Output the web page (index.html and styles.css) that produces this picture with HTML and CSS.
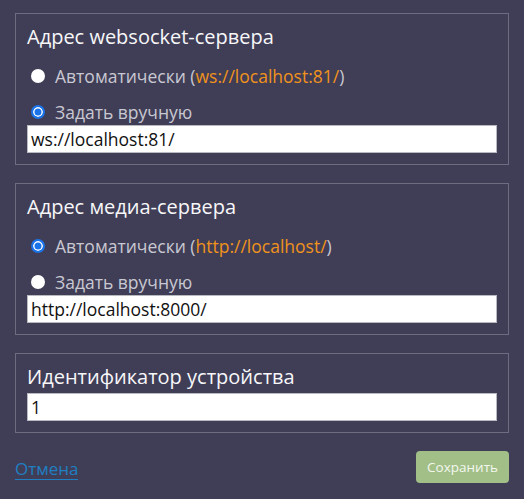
FILE: index.html
```html
<!DOCTYPE html>
<html lang="ru">
<head>
<meta charset="utf-8">
<link rel="stylesheet" href="styles.css">
</head>
<body>
<div class="page">
  <section class="box">
    <div class="title">Адрес websocket-сервера</div>
    <label class="radio-row first"><span class="radio"></span><span>Автоматически (<span class="accent">ws://localhost:81/</span>)</span></label>
    <label class="radio-row"><span class="radio checked"></span><span>Задать вручную</span></label>
    <div class="input">ws://localhost:81/</div>
  </section>
  <section class="box">
    <div class="title">Адрес медиа-сервера</div>
    <label class="radio-row first"><span class="radio checked"></span><span>Автоматически (<span class="accent">http://localhost/</span>)</span></label>
    <label class="radio-row"><span class="radio"></span><span>Задать вручную</span></label>
    <div class="input">http://localhost:8000/</div>
  </section>
  <section class="box short">
    <div class="title">Идентификатор устройства</div>
    <div class="input">1</div>
  </section>
  <div class="footer">
    <a class="cancel" href="#">Отмена</a>
    <span class="save">Сохранить</span>
  </div>
</div>
</body>
</html>
```
FILE: styles.css
```css
html, body {
  margin: 0;
  padding: 0;
  background: #403e56;
}
body {
  font-family: "Open Sans", "Noto Sans", sans-serif;
  color: #f2f2f4;
}
.page {
  padding: 13px 15px 0 15px;
  display: flex;
  flex-direction: column;
  gap: 18px;
}
.box {
  border: 1px solid #6e6c80;
  padding: 9px 11px 11px 11px;
  display: flex;
  flex-direction: column;
}
.title {
  font-size: 20px;
  line-height: 28px;
  color: #f7f7f9;
}
.radio-row {
  display: flex;
  align-items: center;
  font-size: 17.5px;
  line-height: 24px;
  color: #c9c8d2;
  margin-top: 12px;
}
.radio-row.first {
  margin-top: 13px;
}
.radio {
  width: 14px;
  height: 14px;
  border-radius: 50%;
  background: #ffffff;
  margin-left: 4px;
  margin-right: 10px;
  box-sizing: border-box;
  flex: none;
}
.radio.checked {
  background: #1a73e8;
  border: 2px solid #1a73e8;
  box-shadow: inset 0 0 0 1.5px #ffffff;
}
.accent {
  color: #f0921c;
}
.input {
  margin-top: 1px;
  height: 28px;
  box-sizing: border-box;
  background: #fff;
  border: 1px solid #b9b9c0;
  color: #111;
  font-size: 17.5px;
  line-height: 26px;
  padding: 0 3px;
}
.short .input {
  margin-top: 2px;
}
.footer {
  display: flex;
  justify-content: space-between;
  align-items: center;
  margin-top: 0;
}
.cancel {
  color: #1f7fc2;
  font-size: 17px;
  text-decoration: none;
  border-bottom: 1px solid #1f7fc2;
  line-height: 20px;
  margin-top: 4px;
}
.save {
  background: #a2bf88;
  color: #f3f7ee;
  font-size: 13.5px;
  border-radius: 4px;
  height: 32px;
  line-height: 32px;
  padding: 0 11px;
}
```
